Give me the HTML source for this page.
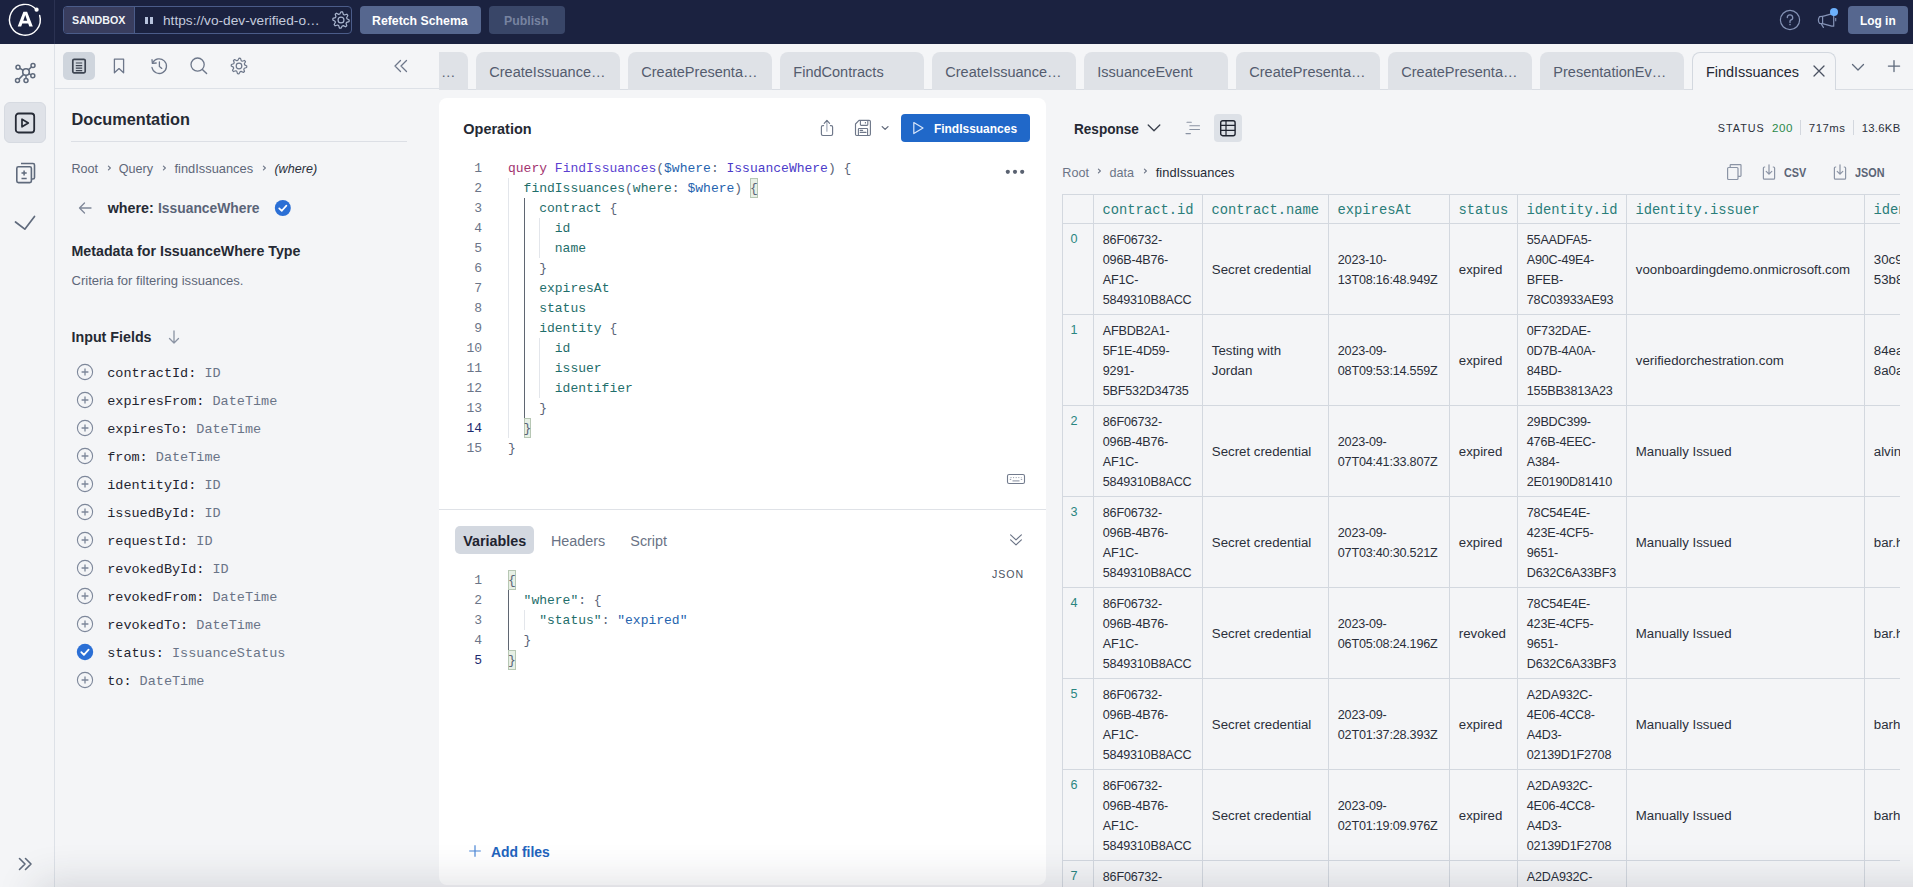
<!DOCTYPE html>
<html><head><meta charset="utf-8"><style>
html,body{margin:0;padding:0;width:1913px;height:887px;overflow:hidden;background:#f4f5f7;font-family:"Liberation Sans", sans-serif;}
.t{position:absolute;white-space:nowrap;line-height:20px;}

svg{overflow:visible}
</style></head><body>
<div style="position:absolute;left:0px;top:0px;width:1913px;height:44px;background:#1b2240"></div><div style="position:absolute;left:54px;top:0px;width:1px;height:44px;background:#2b3252"></div><svg style="position:absolute;left:7px;top:2px;" width="36" height="36" viewBox="0 0 36 36" fill="none"><path d="M32.68 13.48 A15.4 15.4 0 1 1 29.56 7.74" stroke="#fff" stroke-width="1.45" stroke-linecap="round"/><circle cx="29.6" cy="7.7" r="2.1" fill="#fff"/><path fill-rule="evenodd" d="M10.7 24.4 L16.4 9.8 L20.1 9.8 L25.8 24.4 L22.3 24.4 L21.2 21.4 L15.3 21.4 L14.2 24.4 Z M16.3 18.8 L18.25 13.1 L20.2 18.8 Z" fill="#fff"/></svg><div style="position:absolute;left:63px;top:6px;width:289px;height:28px;box-sizing:border-box;border:1px solid #4b5c89;border-radius:4px;background:#1b2240"></div><div style="position:absolute;left:64px;top:7px;width:70px;height:26px;background:#393d5e;border-radius:3px 0 0 3px"></div><div style="position:absolute;left:134px;top:7px;width:1px;height:26px;background:#4b5c89"></div><div class="t" style="left:72px;top:10px;font-size:10.7px;color:#f2f4f8;font-weight:700;">SANDBOX</div><div style="position:absolute;left:145px;top:16.5px;width:3px;height:7.5px;background:#b7c3dc"></div><div style="position:absolute;left:150px;top:16.5px;width:3px;height:7.5px;background:#b7c3dc"></div><div class="t" style="left:163px;top:11px;font-size:13.7px;color:#c3cbdd;">https://vo-dev-verified-o…</div><svg style="position:absolute;left:331px;top:10px;" width="20" height="20" viewBox="0 0 20 20" fill="none"><path d="M18.20 10.00 L18.04 11.60 L15.61 12.32 L15.05 13.37 L15.80 15.80 L14.56 16.82 L12.32 15.61 L11.18 15.95 L10.00 18.20 L8.40 18.04 L7.68 15.61 L6.63 15.05 L4.20 15.80 L3.18 14.56 L4.39 12.32 L4.05 11.18 L1.80 10.00 L1.96 8.40 L4.39 7.68 L4.95 6.63 L4.20 4.20 L5.44 3.18 L7.68 4.39 L8.82 4.05 L10.00 1.80 L11.60 1.96 L12.32 4.39 L13.37 4.95 L15.80 4.20 L16.82 5.44 L15.61 7.68 L15.95 8.82Z" stroke="#aab6cf" stroke-width="1.2" stroke-linejoin="round"/><circle cx="10" cy="10" r="2.95" stroke="#aab6cf" stroke-width="1.2"/></svg><div style="position:absolute;left:360px;top:6px;width:121px;height:28px;background:#56678f;border-radius:4px"></div><div class="t" style="left:372px;top:11px;font-size:12.3px;color:#ffffff;font-weight:700;">Refetch Schema</div><div style="position:absolute;left:489px;top:6px;width:76px;height:28px;background:#394668;border-radius:4px"></div><div class="t" style="left:504px;top:11px;font-size:12.3px;color:#7783a0;font-weight:700;">Publish</div><svg style="position:absolute;left:1778px;top:8px;" width="24" height="24" viewBox="0 0 24 24" fill="none"><circle cx="12" cy="12" r="9.6" stroke="#8593b6" stroke-width="1.2"/><path d="M9.3 9.6 A2.7 2.7 0 1 1 12.6 12.2 Q12 12.5 12 13.6 L12 14.4" stroke="#8593b6" stroke-width="1.3" fill="none" stroke-linecap="round"/><circle cx="12" cy="16.6" r="0.8" fill="#8593b6"/></svg><svg style="position:absolute;left:1810px;top:0px;" width="30" height="32" viewBox="0 0 30 32" fill="none"><path d="M12.6 16.4 L21.7 13.9 L23.7 13.9 L23.7 26.2 L21.7 26.2 L12.6 23.7 Z" stroke="#8593b6" stroke-width="1.2" stroke-linejoin="round"/><path d="M12.6 16.4 L9.6 16.6 Q7.2 20 9.6 23.5 L12.6 23.7" stroke="#8593b6" stroke-width="1.2" stroke-linejoin="round"/><path d="M11 23.4 L13.4 27.4" stroke="#8593b6" stroke-width="1.2" stroke-linecap="round"/><path d="M25.7 18 L25.7 21.3" stroke="#8593b6" stroke-width="1.1"/><circle cx="24" cy="12" r="4" fill="#6cb0fb"/></svg><div style="position:absolute;left:1848px;top:6px;width:60px;height:28px;background:#56678f;border-radius:4px"></div><div class="t" style="left:1860px;top:11px;font-size:11.9px;color:#ffffff;font-weight:700;">Log in</div><div style="position:absolute;left:0px;top:44px;width:54px;height:843px;background:#f4f5f7"></div><div style="position:absolute;left:54px;top:44px;width:1px;height:843px;background:#dde1e7"></div><svg style="position:absolute;left:13px;top:59px;" width="26" height="26" viewBox="0 0 26 26" fill="none"><line x1="13" y1="13" x2="5" y2="8.2" stroke="#5f6a7c" stroke-width="1.5"/><line x1="13" y1="13" x2="20" y2="6.6" stroke="#5f6a7c" stroke-width="1.5"/><line x1="13" y1="13" x2="19.8" y2="16.8" stroke="#5f6a7c" stroke-width="1.5"/><line x1="13" y1="13" x2="13" y2="21.6" stroke="#5f6a7c" stroke-width="1.5"/><line x1="13" y1="13" x2="4.5" y2="21.6" stroke="#5f6a7c" stroke-width="1.5"/><circle cx="13" cy="13" r="3.3" fill="#f4f5f7" stroke="#5f6a7c" stroke-width="1.6"/><circle cx="5" cy="8.2" r="2" fill="#f4f5f7" stroke="#5f6a7c" stroke-width="1.5"/><circle cx="20" cy="6.6" r="2" fill="#f4f5f7" stroke="#5f6a7c" stroke-width="1.5"/><circle cx="19.8" cy="16.8" r="2" fill="#f4f5f7" stroke="#5f6a7c" stroke-width="1.5"/><circle cx="13" cy="21.6" r="2" fill="#f4f5f7" stroke="#5f6a7c" stroke-width="1.5"/><circle cx="4.5" cy="21.6" r="2" fill="#f4f5f7" stroke="#5f6a7c" stroke-width="1.5"/></svg><div style="position:absolute;left:4px;top:102px;width:42px;height:41px;box-sizing:border-box;background:#dfe2e8;border:1px solid #d6dae1;border-radius:6px"></div><svg style="position:absolute;left:13px;top:111px;" width="24" height="24" viewBox="0 0 24 24" fill="none"><rect x="2.8" y="2.5" width="18.4" height="19" rx="2.8" stroke="#262b36" stroke-width="1.8"/><path d="M9 8.2 L9 15.8 L15.3 12 Z" stroke="#262b36" stroke-width="1.7" stroke-linejoin="round"/></svg><svg style="position:absolute;left:13px;top:160px;" width="26" height="26" viewBox="0 0 26 26" fill="none"><path d="M8 3.5 L20 3.5 Q21.5 3.5 21.5 5 L21.5 17.5 Q21.5 19 20 19 L19 19" stroke="#5f6a7c" stroke-width="1.6"/><rect x="3.8" y="6.8" width="14.6" height="15.8" rx="1.6" stroke="#5f6a7c" stroke-width="1.6"/><path d="M8.5 13 L13.7 13 M11.1 10.4 L11.1 15.6 M8.5 18.5 L13.7 18.5" stroke="#5f6a7c" stroke-width="1.5"/></svg><svg style="position:absolute;left:13px;top:210px;" width="26" height="24" viewBox="0 0 26 24" fill="none"><path d="M2.5 12 L11.8 19.2 L21.5 6.5" stroke="#5f6a7c" stroke-width="1.7" stroke-linecap="round" stroke-linejoin="round"/></svg><svg style="position:absolute;left:17px;top:856px;" width="18" height="16" viewBox="0 0 18 16" fill="none"><path d="M2.5 2.5 L8 8 L2.5 13.5 M8.5 2.5 L14 8 L8.5 13.5" stroke="#5f6a7c" stroke-width="1.6" stroke-linecap="round" stroke-linejoin="round"/></svg><div style="position:absolute;left:55px;top:44px;width:385px;height:843px;background:#f4f5f7"></div><div style="position:absolute;left:55px;top:88px;width:384px;height:1px;background:#dde1e7"></div><div style="position:absolute;left:63px;top:52px;width:32px;height:28px;background:#cfd5dd;border-radius:5px"></div><svg style="position:absolute;left:71px;top:58px;" width="16" height="16" viewBox="0 0 16 16" fill="none"><rect x="1.8" y="1.3" width="12.4" height="13.6" rx="1.3" stroke="#3d4451" stroke-width="1.7"/><path d="M4.8 5 H11.2 M4.8 7.6 H11.2 M4.8 10.2 H11.2 M4.8 12.6 H11.2" stroke="#3d4451" stroke-width="1.2"/></svg><svg style="position:absolute;left:111px;top:57px;" width="16" height="18" viewBox="0 0 16 18" fill="none"><path d="M3.4 2.2 H12.6 V15.8 L8 11.6 L3.4 15.8 Z" stroke="#6d778a" stroke-width="1.3" stroke-linejoin="round"/></svg><svg style="position:absolute;left:150px;top:57px;" width="18" height="18" viewBox="0 0 18 18" fill="none"><path d="M2.6 6 A7.3 7.3 0 1 1 2 10.5" stroke="#6d778a" stroke-width="1.3" stroke-linecap="round"/><path d="M2 2.6 L2.4 6.4 L6.2 6" stroke="#6d778a" stroke-width="1.3" stroke-linecap="round" stroke-linejoin="round"/><path d="M9.4 5 L9.4 9.4 L11.8 11.4" stroke="#6d778a" stroke-width="1.3" stroke-linecap="round"/></svg><svg style="position:absolute;left:190px;top:57px;" width="18" height="18" viewBox="0 0 18 18" fill="none"><circle cx="7.6" cy="7.6" r="6.6" stroke="#6d778a" stroke-width="1.3"/><path d="M12.4 12.4 L16.6 16.6" stroke="#6d778a" stroke-width="1.4" stroke-linecap="round"/></svg><svg style="position:absolute;left:230px;top:57px;" width="18" height="18" viewBox="0 0 18 18" fill="none"><path d="M16.80 9.00 L16.65 10.52 L14.33 11.21 L13.80 12.21 L14.52 14.52 L13.33 15.49 L11.21 14.33 L10.13 14.66 L9.00 16.80 L7.48 16.65 L6.79 14.33 L5.79 13.80 L3.48 14.52 L2.51 13.33 L3.67 11.21 L3.34 10.13 L1.20 9.00 L1.35 7.48 L3.67 6.79 L4.20 5.79 L3.48 3.48 L4.67 2.51 L6.79 3.67 L7.87 3.34 L9.00 1.20 L10.52 1.35 L11.21 3.67 L12.21 4.20 L14.52 3.48 L15.49 4.67 L14.33 6.79 L14.66 7.87Z" stroke="#6d778a" stroke-width="1.2" stroke-linejoin="round"/><circle cx="9" cy="9" r="2.81" stroke="#6d778a" stroke-width="1.2"/></svg><svg style="position:absolute;left:392px;top:57px;" width="18" height="18" viewBox="0 0 18 18" fill="none"><path d="M8.5 3.5 L3 9 L8.5 14.5 M14.5 3.5 L9 9 L14.5 14.5" stroke="#6d778a" stroke-width="1.3" stroke-linecap="round" stroke-linejoin="round"/></svg><div class="t" style="left:71.5px;top:109px;font-size:16.3px;color:#252933;font-weight:700;">Documentation</div><div style="position:absolute;left:71px;top:141px;width:336px;height:1px;background:#dcdfe5"></div><div class="t" style="left:71.5px;top:159px;font-size:12.6px;color:#5e6779;">Root</div><svg style="position:absolute;left:106px;top:164px;" width="7" height="8" viewBox="0 0 7 8" fill="none"><path d="M2.4 2.2 L4.4 4 L2.4 5.8" stroke="#6b7486" stroke-width="1.1" stroke-linecap="round" stroke-linejoin="round"/></svg><div class="t" style="left:118.8px;top:159px;font-size:12.6px;color:#5e6779;">Query</div><svg style="position:absolute;left:161px;top:164px;" width="7" height="8" viewBox="0 0 7 8" fill="none"><path d="M2.4 2.2 L4.4 4 L2.4 5.8" stroke="#6b7486" stroke-width="1.1" stroke-linecap="round" stroke-linejoin="round"/></svg><div class="t" style="left:174.5px;top:159px;font-size:12.87px;color:#5e6779;">findIssuances</div><svg style="position:absolute;left:261px;top:164px;" width="7" height="8" viewBox="0 0 7 8" fill="none"><path d="M2.4 2.2 L4.4 4 L2.4 5.8" stroke="#6b7486" stroke-width="1.1" stroke-linecap="round" stroke-linejoin="round"/></svg><div class="t" style="left:274.4px;top:159px;font-size:12.6px;color:#2a2f3a;font-style:italic;">(where)</div><svg style="position:absolute;left:77px;top:201px;" width="16" height="14" viewBox="0 0 16 14" fill="none"><path d="M7.5 2 L2.5 7 L7.5 12 M2.5 7 H14" stroke="#7f8899" stroke-width="1.3" stroke-linecap="round" stroke-linejoin="round"/></svg><div class="t" style="left:107.7px;top:198px;font-size:14.27px;color:#252933;font-weight:700;">where:</div><div class="t" style="left:158.4px;top:198px;font-size:14.27px;color:#5a6478;font-weight:700;transform:scaleX(0.97);transform-origin:0 0;">IssuanceWhere</div><svg style="position:absolute;left:274px;top:199px;" width="18" height="18" viewBox="0 0 18 18" fill="none"><circle cx="8.8" cy="9" r="8" fill="#2b6fd5"/><path d="M5.2 9.3 L7.8 11.8 L12.4 6.6" stroke="#fff" stroke-width="1.7" stroke-linecap="round" stroke-linejoin="round"/></svg><div class="t" style="left:71.5px;top:241px;font-size:14.22px;color:#252933;font-weight:700;">Metadata for IssuanceWhere Type</div><div class="t" style="left:71.5px;top:271px;font-size:13.05px;color:#5e6779;">Criteria for filtering issuances.</div><div class="t" style="left:71.5px;top:327px;font-size:14.28px;color:#252933;font-weight:700;">Input Fields</div><svg style="position:absolute;left:166px;top:329px;" width="16" height="16" viewBox="0 0 16 16" fill="none"><path d="M8 2 V14 M3.5 9.5 L8 14 L12.5 9.5" stroke="#8a93a3" stroke-width="1.3" stroke-linecap="round" stroke-linejoin="round"/></svg><svg style="position:absolute;left:76px;top:363px;" width="18" height="18" viewBox="0 0 18 18" fill="none"><circle cx="9" cy="9" r="7.6" stroke="#7d879a" stroke-width="1.1"/><path d="M9 5.6 V12.4 M5.6 9 H12.4" stroke="#7d879a" stroke-width="1.3"/></svg><div class="t" style="left:107.2px;top:364px;font-size:13.5px;color:#1f2430;font-family:'Liberation Mono', monospace;">contractId: <span style="color:#6a7487">ID</span></div><svg style="position:absolute;left:76px;top:391px;" width="18" height="18" viewBox="0 0 18 18" fill="none"><circle cx="9" cy="9" r="7.6" stroke="#7d879a" stroke-width="1.1"/><path d="M9 5.6 V12.4 M5.6 9 H12.4" stroke="#7d879a" stroke-width="1.3"/></svg><div class="t" style="left:107.2px;top:392px;font-size:13.5px;color:#1f2430;font-family:'Liberation Mono', monospace;">expiresFrom: <span style="color:#6a7487">DateTime</span></div><svg style="position:absolute;left:76px;top:419px;" width="18" height="18" viewBox="0 0 18 18" fill="none"><circle cx="9" cy="9" r="7.6" stroke="#7d879a" stroke-width="1.1"/><path d="M9 5.6 V12.4 M5.6 9 H12.4" stroke="#7d879a" stroke-width="1.3"/></svg><div class="t" style="left:107.2px;top:420px;font-size:13.5px;color:#1f2430;font-family:'Liberation Mono', monospace;">expiresTo: <span style="color:#6a7487">DateTime</span></div><svg style="position:absolute;left:76px;top:447px;" width="18" height="18" viewBox="0 0 18 18" fill="none"><circle cx="9" cy="9" r="7.6" stroke="#7d879a" stroke-width="1.1"/><path d="M9 5.6 V12.4 M5.6 9 H12.4" stroke="#7d879a" stroke-width="1.3"/></svg><div class="t" style="left:107.2px;top:448px;font-size:13.5px;color:#1f2430;font-family:'Liberation Mono', monospace;">from: <span style="color:#6a7487">DateTime</span></div><svg style="position:absolute;left:76px;top:475px;" width="18" height="18" viewBox="0 0 18 18" fill="none"><circle cx="9" cy="9" r="7.6" stroke="#7d879a" stroke-width="1.1"/><path d="M9 5.6 V12.4 M5.6 9 H12.4" stroke="#7d879a" stroke-width="1.3"/></svg><div class="t" style="left:107.2px;top:476px;font-size:13.5px;color:#1f2430;font-family:'Liberation Mono', monospace;">identityId: <span style="color:#6a7487">ID</span></div><svg style="position:absolute;left:76px;top:503px;" width="18" height="18" viewBox="0 0 18 18" fill="none"><circle cx="9" cy="9" r="7.6" stroke="#7d879a" stroke-width="1.1"/><path d="M9 5.6 V12.4 M5.6 9 H12.4" stroke="#7d879a" stroke-width="1.3"/></svg><div class="t" style="left:107.2px;top:504px;font-size:13.5px;color:#1f2430;font-family:'Liberation Mono', monospace;">issuedById: <span style="color:#6a7487">ID</span></div><svg style="position:absolute;left:76px;top:531px;" width="18" height="18" viewBox="0 0 18 18" fill="none"><circle cx="9" cy="9" r="7.6" stroke="#7d879a" stroke-width="1.1"/><path d="M9 5.6 V12.4 M5.6 9 H12.4" stroke="#7d879a" stroke-width="1.3"/></svg><div class="t" style="left:107.2px;top:532px;font-size:13.5px;color:#1f2430;font-family:'Liberation Mono', monospace;">requestId: <span style="color:#6a7487">ID</span></div><svg style="position:absolute;left:76px;top:559px;" width="18" height="18" viewBox="0 0 18 18" fill="none"><circle cx="9" cy="9" r="7.6" stroke="#7d879a" stroke-width="1.1"/><path d="M9 5.6 V12.4 M5.6 9 H12.4" stroke="#7d879a" stroke-width="1.3"/></svg><div class="t" style="left:107.2px;top:560px;font-size:13.5px;color:#1f2430;font-family:'Liberation Mono', monospace;">revokedById: <span style="color:#6a7487">ID</span></div><svg style="position:absolute;left:76px;top:587px;" width="18" height="18" viewBox="0 0 18 18" fill="none"><circle cx="9" cy="9" r="7.6" stroke="#7d879a" stroke-width="1.1"/><path d="M9 5.6 V12.4 M5.6 9 H12.4" stroke="#7d879a" stroke-width="1.3"/></svg><div class="t" style="left:107.2px;top:588px;font-size:13.5px;color:#1f2430;font-family:'Liberation Mono', monospace;">revokedFrom: <span style="color:#6a7487">DateTime</span></div><svg style="position:absolute;left:76px;top:615px;" width="18" height="18" viewBox="0 0 18 18" fill="none"><circle cx="9" cy="9" r="7.6" stroke="#7d879a" stroke-width="1.1"/><path d="M9 5.6 V12.4 M5.6 9 H12.4" stroke="#7d879a" stroke-width="1.3"/></svg><div class="t" style="left:107.2px;top:616px;font-size:13.5px;color:#1f2430;font-family:'Liberation Mono', monospace;">revokedTo: <span style="color:#6a7487">DateTime</span></div><svg style="position:absolute;left:76px;top:643px;" width="18" height="18" viewBox="0 0 18 18" fill="none"><circle cx="9" cy="9" r="8.2" fill="#2b6fd5"/><path d="M5.3 9.2 L7.9 11.8 L12.6 6.6" stroke="#fff" stroke-width="1.8" stroke-linecap="round" stroke-linejoin="round"/></svg><div class="t" style="left:107.2px;top:644px;font-size:13.5px;color:#1f2430;font-family:'Liberation Mono', monospace;">status: <span style="color:#6a7487">IssuanceStatus</span></div><svg style="position:absolute;left:76px;top:671px;" width="18" height="18" viewBox="0 0 18 18" fill="none"><circle cx="9" cy="9" r="7.6" stroke="#7d879a" stroke-width="1.1"/><path d="M9 5.6 V12.4 M5.6 9 H12.4" stroke="#7d879a" stroke-width="1.3"/></svg><div class="t" style="left:107.2px;top:672px;font-size:13.5px;color:#1f2430;font-family:'Liberation Mono', monospace;">to: <span style="color:#6a7487">DateTime</span></div><div style="position:absolute;left:439px;top:44px;width:1474px;height:45px;background:#f4f5f7"></div><div style="position:absolute;left:439px;top:89px;width:1474px;height:1px;background:#d9dde3"></div><div style="position:absolute;left:439px;top:52px;width:29px;height:38px;background:#dfe2e7;border-radius:0 8px 0 0"></div><div class="t" style="left:441px;top:62px;font-size:14.5px;color:#5a6275;">…</div><div style="position:absolute;left:476px;top:52px;width:144px;height:38px;background:#dfe2e7;border-radius:8px 8px 0 0"></div><div class="t" style="left:489.3px;top:62px;font-size:14.53px;color:#545c6e;">CreateIssuance…</div><div style="position:absolute;left:628px;top:52px;width:144px;height:38px;background:#dfe2e7;border-radius:8px 8px 0 0"></div><div class="t" style="left:641.3px;top:62px;font-size:14.53px;color:#545c6e;">CreatePresenta…</div><div style="position:absolute;left:780px;top:52px;width:144px;height:38px;background:#dfe2e7;border-radius:8px 8px 0 0"></div><div class="t" style="left:793.3px;top:62px;font-size:14.53px;color:#545c6e;">FindContracts</div><div style="position:absolute;left:932px;top:52px;width:144px;height:38px;background:#dfe2e7;border-radius:8px 8px 0 0"></div><div class="t" style="left:945.3px;top:62px;font-size:14.53px;color:#545c6e;">CreateIssuance…</div><div style="position:absolute;left:1084px;top:52px;width:144px;height:38px;background:#dfe2e7;border-radius:8px 8px 0 0"></div><div class="t" style="left:1097.3px;top:62px;font-size:14.53px;color:#545c6e;">IssuanceEvent</div><div style="position:absolute;left:1236px;top:52px;width:144px;height:38px;background:#dfe2e7;border-radius:8px 8px 0 0"></div><div class="t" style="left:1249.3px;top:62px;font-size:14.53px;color:#545c6e;">CreatePresenta…</div><div style="position:absolute;left:1388px;top:52px;width:144px;height:38px;background:#dfe2e7;border-radius:8px 8px 0 0"></div><div class="t" style="left:1401.3px;top:62px;font-size:14.53px;color:#545c6e;">CreatePresenta…</div><div style="position:absolute;left:1540px;top:52px;width:144px;height:38px;background:#dfe2e7;border-radius:8px 8px 0 0"></div><div class="t" style="left:1553.3px;top:62px;font-size:14.53px;color:#545c6e;">PresentationEv…</div><div style="position:absolute;left:1692px;top:52px;width:144px;height:38px;box-sizing:border-box;background:#f4f5f7;border:1px solid #d3d8df;border-bottom:none;border-radius:8px 8px 0 0"></div><div class="t" style="left:1706px;top:62px;font-size:14.45px;color:#242833;">FindIssuances</div><svg style="position:absolute;left:1812px;top:64px;" width="14" height="14" viewBox="0 0 14 14" fill="none"><path d="M2 2 L12 12 M12 2 L2 12" stroke="#4a5262" stroke-width="1.3" stroke-linecap="round"/></svg><svg style="position:absolute;left:1850px;top:61px;" width="16" height="12" viewBox="0 0 16 12" fill="none"><path d="M2.5 3.5 L8 9 L13.5 3.5" stroke="#5f6a7c" stroke-width="1.3" stroke-linecap="round" stroke-linejoin="round"/></svg><svg style="position:absolute;left:1886px;top:58px;" width="16" height="16" viewBox="0 0 16 16" fill="none"><path d="M8 2.6 V13.6 M2.4 8.1 H13.6" stroke="#5f6a7c" stroke-width="1.3" stroke-linecap="round"/></svg><div style="position:absolute;left:439px;top:98px;width:607px;height:787px;background:#ffffff;border-radius:8px"></div><div class="t" style="left:463.3px;top:119px;font-size:14.48px;color:#252933;font-weight:700;">Operation</div><svg style="position:absolute;left:812px;top:112px;" width="84" height="32" viewBox="0 0 84 32" fill="none"><path d="M823.6 125.6 H822.8 Q821.4 125.6 821.4 127 V134.1 Q821.4 135.5 822.8 135.5 H831.2 Q832.6 135.5 832.6 134.1 V127 Q832.6 125.6 831.2 125.6 H830.4" transform="translate(-812 -112)" stroke="#6e7789" stroke-width="1.15" stroke-linecap="round"/><path d="M826.9 120.6 V131.2" transform="translate(-812 -112)" stroke="#9aa3b3" stroke-width="1.1" stroke-linecap="round"/><path d="M824.2 123.3 L826.9 120.4 L829.6 123.3" transform="translate(-812 -112)" stroke="#6e7789" stroke-width="1.15" stroke-linecap="round" stroke-linejoin="round"/><path d="M859 120.4 H869.2 Q870.4 120.4 870.4 121.6 V134.3 Q870.4 135.5 869.2 135.5 H856.7 Q855.5 135.5 855.5 134.3 V124 Z" transform="translate(-812 -112)" stroke="#6e7789" stroke-width="1.15" stroke-linejoin="round"/><path d="M860.4 120.4 V124.6 Q860.4 125.4 861.2 125.4 H867 Q867.8 125.4 867.8 124.6 V120.4 M865.4 122 V123.6" transform="translate(-812 -112)" stroke="#6e7789" stroke-width="1.1"/><path d="M858.4 135.5 V129.3 Q858.4 128.5 859.2 128.5 H866.8 Q867.6 128.5 867.6 129.3 V135.5 M860.2 130.4 H862.6 M860.2 132.4 H866" transform="translate(-812 -112)" stroke="#6e7789" stroke-width="1.1" stroke-linecap="round"/><path d="M882.2 126.6 L885.1 129.4 L888 126.6" transform="translate(-812 -112)" stroke="#5f6879" stroke-width="1.3" stroke-linecap="round" stroke-linejoin="round"/></svg><div style="position:absolute;left:901px;top:114px;width:129px;height:28px;background:#2068c9;border-radius:4px"></div><svg style="position:absolute;left:910px;top:120px;" width="16" height="16" viewBox="0 0 16 16" fill="none"><path d="M3.8 2.6 V13.6 L13 8.1 Z" stroke="#d9e6fa" stroke-width="1.2" stroke-linejoin="round"/></svg><div class="t" style="left:933.9px;top:119px;font-size:11.97px;color:#ffffff;font-weight:700;">FindIssuances</div><svg style="position:absolute;left:1003px;top:166px;" width="24" height="12" viewBox="0 0 24 12" fill="none"><circle cx="4.8" cy="5.8" r="2.1" fill="#5a6271"/><circle cx="12" cy="5.8" r="2.1" fill="#5a6271"/><circle cx="19.2" cy="5.8" r="2.1" fill="#5a6271"/></svg><div style="position:absolute;left:508px;top:178px;width:1px;height:260px;background:#e3e6eb"></div><div style="position:absolute;left:524px;top:198px;width:1px;height:220px;background:#5f6672"></div><div style="position:absolute;left:539px;top:218px;width:1px;height:40px;background:#e3e6eb"></div><div style="position:absolute;left:539px;top:338px;width:1px;height:60px;background:#e3e6eb"></div><div style="position:absolute;left:750px;top:178px;width:8px;height:20px;box-sizing:border-box;background:#e7f0e5;border:1px solid #b7c7b4"></div><div style="position:absolute;left:524px;top:418px;width:7px;height:20px;box-sizing:border-box;background:#e7f0e5;border:1px solid #b7c7b4"></div><div class="t" style="left:474.2px;top:159px;font-size:13px;color:#6b7588;font-family:'Liberation Mono', monospace;">1</div><div class="t" style="left:508px;top:159px;font-size:13px;color:#1f6e6b;font-family:'Liberation Mono', monospace;white-space:pre;"><span style="color:#a2336f">query</span> <span style="color:#5b3fd0">FindIssuances</span><span style="color:#5a6478">(</span><span style="color:#2463ae">$where</span><span style="color:#5a6478">:</span> <span style="color:#4b3bc9">IssuanceWhere</span><span style="color:#5a6478">) {</span></div><div class="t" style="left:474.2px;top:179px;font-size:13px;color:#6b7588;font-family:'Liberation Mono', monospace;">2</div><div class="t" style="left:508px;top:179px;font-size:13px;color:#1f6e6b;font-family:'Liberation Mono', monospace;white-space:pre;">  <span style="color:#1f6e6b">findIssuances</span><span style="color:#5a6478">(</span><span style="color:#1f6e6b">where</span><span style="color:#5a6478">:</span> <span style="color:#2463ae">$where</span><span style="color:#5a6478">)</span> <span class="mb" style="color:#5a6478">{</span></div><div class="t" style="left:474.2px;top:199px;font-size:13px;color:#6b7588;font-family:'Liberation Mono', monospace;">3</div><div class="t" style="left:508px;top:199px;font-size:13px;color:#1f6e6b;font-family:'Liberation Mono', monospace;white-space:pre;">    <span style="color:#1f6e6b">contract</span> <span style="color:#5a6478">{</span></div><div class="t" style="left:474.2px;top:219px;font-size:13px;color:#6b7588;font-family:'Liberation Mono', monospace;">4</div><div class="t" style="left:508px;top:219px;font-size:13px;color:#1f6e6b;font-family:'Liberation Mono', monospace;white-space:pre;">      <span style="color:#1f6e6b">id</span></div><div class="t" style="left:474.2px;top:239px;font-size:13px;color:#6b7588;font-family:'Liberation Mono', monospace;">5</div><div class="t" style="left:508px;top:239px;font-size:13px;color:#1f6e6b;font-family:'Liberation Mono', monospace;white-space:pre;">      <span style="color:#1f6e6b">name</span></div><div class="t" style="left:474.2px;top:259px;font-size:13px;color:#6b7588;font-family:'Liberation Mono', monospace;">6</div><div class="t" style="left:508px;top:259px;font-size:13px;color:#1f6e6b;font-family:'Liberation Mono', monospace;white-space:pre;">    <span style="color:#5a6478">}</span></div><div class="t" style="left:474.2px;top:279px;font-size:13px;color:#6b7588;font-family:'Liberation Mono', monospace;">7</div><div class="t" style="left:508px;top:279px;font-size:13px;color:#1f6e6b;font-family:'Liberation Mono', monospace;white-space:pre;">    <span style="color:#1f6e6b">expiresAt</span></div><div class="t" style="left:474.2px;top:299px;font-size:13px;color:#6b7588;font-family:'Liberation Mono', monospace;">8</div><div class="t" style="left:508px;top:299px;font-size:13px;color:#1f6e6b;font-family:'Liberation Mono', monospace;white-space:pre;">    <span style="color:#1f6e6b">status</span></div><div class="t" style="left:474.2px;top:319px;font-size:13px;color:#6b7588;font-family:'Liberation Mono', monospace;">9</div><div class="t" style="left:508px;top:319px;font-size:13px;color:#1f6e6b;font-family:'Liberation Mono', monospace;white-space:pre;">    <span style="color:#1f6e6b">identity</span> <span style="color:#5a6478">{</span></div><div class="t" style="left:466.4px;top:339px;font-size:13px;color:#6b7588;font-family:'Liberation Mono', monospace;">10</div><div class="t" style="left:508px;top:339px;font-size:13px;color:#1f6e6b;font-family:'Liberation Mono', monospace;white-space:pre;">      <span style="color:#1f6e6b">id</span></div><div class="t" style="left:466.4px;top:359px;font-size:13px;color:#6b7588;font-family:'Liberation Mono', monospace;">11</div><div class="t" style="left:508px;top:359px;font-size:13px;color:#1f6e6b;font-family:'Liberation Mono', monospace;white-space:pre;">      <span style="color:#1f6e6b">issuer</span></div><div class="t" style="left:466.4px;top:379px;font-size:13px;color:#6b7588;font-family:'Liberation Mono', monospace;">12</div><div class="t" style="left:508px;top:379px;font-size:13px;color:#1f6e6b;font-family:'Liberation Mono', monospace;white-space:pre;">      <span style="color:#1f6e6b">identifier</span></div><div class="t" style="left:466.4px;top:399px;font-size:13px;color:#6b7588;font-family:'Liberation Mono', monospace;">13</div><div class="t" style="left:508px;top:399px;font-size:13px;color:#1f6e6b;font-family:'Liberation Mono', monospace;white-space:pre;">    <span style="color:#5a6478">}</span></div><div class="t" style="left:466.4px;top:419px;font-size:13px;color:#1c2b6e;font-family:'Liberation Mono', monospace;">14</div><div class="t" style="left:508px;top:419px;font-size:13px;color:#1f6e6b;font-family:'Liberation Mono', monospace;white-space:pre;">  <span class="mb" style="color:#5a6478">}</span></div><div class="t" style="left:466.4px;top:439px;font-size:13px;color:#6b7588;font-family:'Liberation Mono', monospace;">15</div><div class="t" style="left:508px;top:439px;font-size:13px;color:#1f6e6b;font-family:'Liberation Mono', monospace;white-space:pre;"><span style="color:#5a6478">}</span></div><svg style="position:absolute;left:1005px;top:472px;" width="22" height="14" viewBox="0 0 22 14" fill="none"><rect x="2.5" y="2.5" width="17" height="9" rx="1.6" stroke="#727b8d" stroke-width="1.1"/><path d="M5.5 5.6 H16.5" stroke="#8f97a6" stroke-width="1" stroke-dasharray="1 1.6"/><path d="M4.8 7.4 H6.2 M15.8 7.4 H17.2" stroke="#8f97a6" stroke-width="1"/><path d="M7.5 8.9 H14.5" stroke="#8f97a6" stroke-width="1.1"/></svg><div style="position:absolute;left:439px;top:509px;width:607px;height:1px;background:#dfe2e7"></div><div style="position:absolute;left:455px;top:526px;width:79px;height:28px;background:#d3d8e0;border-radius:5px"></div><div class="t" style="left:463.3px;top:531px;font-size:14.33px;color:#1f2430;font-weight:700;">Variables</div><div class="t" style="left:550.9px;top:531px;font-size:14.39px;color:#6a7385;">Headers</div><div class="t" style="left:630.3px;top:531px;font-size:14.39px;color:#6a7385;">Script</div><svg style="position:absolute;left:1007px;top:531px;" width="18" height="18" viewBox="0 0 18 18" fill="none"><path d="M3.6 3.8 L9 8.8 L14.4 3.8 M3.6 8.8 L9 13.8 L14.4 8.8" stroke="#6a7385" stroke-width="1.15" stroke-linecap="round" stroke-linejoin="round"/></svg><div class="t" style="left:992px;top:564px;font-size:10.6px;color:#4b5262;letter-spacing:1px;">JSON</div><div style="position:absolute;left:508px;top:590px;width:1px;height:60px;background:#5f6672"></div><div style="position:absolute;left:524px;top:610px;width:1px;height:20px;background:#e3e6eb"></div><div style="position:absolute;left:508px;top:570px;width:8px;height:20px;box-sizing:border-box;background:#e7f0e5;border:1px solid #b7c7b4"></div><div style="position:absolute;left:508px;top:650px;width:8px;height:20px;box-sizing:border-box;background:#e7f0e5;border:1px solid #b7c7b4"></div><div class="t" style="left:474.2px;top:571px;font-size:13px;color:#6b7588;font-family:'Liberation Mono', monospace;">1</div><div class="t" style="left:508px;top:571px;font-size:13px;color:#1f6e6b;font-family:'Liberation Mono', monospace;white-space:pre;"><span class="mb" style="color:#5a6478">{</span></div><div class="t" style="left:474.2px;top:591px;font-size:13px;color:#6b7588;font-family:'Liberation Mono', monospace;">2</div><div class="t" style="left:508px;top:591px;font-size:13px;color:#1f6e6b;font-family:'Liberation Mono', monospace;white-space:pre;">  <span style="color:#1f6e6b">"where"</span><span style="color:#5a6478">: {</span></div><div class="t" style="left:474.2px;top:611px;font-size:13px;color:#6b7588;font-family:'Liberation Mono', monospace;">3</div><div class="t" style="left:508px;top:611px;font-size:13px;color:#1f6e6b;font-family:'Liberation Mono', monospace;white-space:pre;">    <span style="color:#1f6e6b">"status"</span><span style="color:#5a6478">:</span> <span style="color:#2463ae">"expired"</span></div><div class="t" style="left:474.2px;top:631px;font-size:13px;color:#6b7588;font-family:'Liberation Mono', monospace;">4</div><div class="t" style="left:508px;top:631px;font-size:13px;color:#1f6e6b;font-family:'Liberation Mono', monospace;white-space:pre;">  <span style="color:#5a6478">}</span></div><div class="t" style="left:474.2px;top:651px;font-size:13px;color:#1c2b6e;font-family:'Liberation Mono', monospace;">5</div><div class="t" style="left:508px;top:651px;font-size:13px;color:#1f6e6b;font-family:'Liberation Mono', monospace;white-space:pre;"><span class="mb" style="color:#5a6478">}</span></div><svg style="position:absolute;left:466px;top:842px;" width="18" height="18" viewBox="0 0 18 18" fill="none"><path d="M9 3.2 V14.8 M3.2 9 H14.8" stroke="#4a86d6" stroke-width="1.2"/></svg><div class="t" style="left:491px;top:842px;font-size:13.92px;color:#2263bd;font-weight:700;">Add files</div><div style="position:absolute;left:1046px;top:98px;width:867px;height:789px;background:#f4f5f7"></div><div class="t" style="left:1074.3px;top:119px;font-size:14.8px;color:#252933;font-weight:700;transform:scaleX(0.918);transform-origin:0 0;">Response</div><svg style="position:absolute;left:1146px;top:122px;" width="16" height="12" viewBox="0 0 16 12" fill="none"><path d="M2.2 3 L8 8.8 L13.8 3" stroke="#3a404d" stroke-width="1.3" stroke-linecap="round" stroke-linejoin="round"/></svg><svg style="position:absolute;left:1183px;top:119px;" width="18" height="18" viewBox="0 0 18 18" fill="none"><path d="M4 3.3 H8.3 M6.8 6.8 H16.5 M6.8 10.5 H16.5 M3 14.6 H7.4" stroke="#8a93a3" stroke-width="1.1" stroke-linecap="round"/></svg><div style="position:absolute;left:1214px;top:114px;width:28px;height:28px;background:#dde1e7;border-radius:4px"></div><svg style="position:absolute;left:1219px;top:119px;" width="18" height="18" viewBox="0 0 18 18" fill="none"><rect x="1.7" y="1.7" width="14.4" height="15" rx="2" stroke="#1f2430" stroke-width="1.4"/><path d="M1.7 6.3 H16.1 M1.7 11.4 H16.1 M7 1.7 V16.7" stroke="#1f2430" stroke-width="1.2"/></svg><div class="t" style="left:1717.8px;top:118px;font-size:10.8px;color:#2c313c;letter-spacing:1px;">STATUS</div><div class="t" style="left:1772px;top:118px;font-size:11.6px;color:#2b8a4a;letter-spacing:0.6px;">200</div><div style="position:absolute;left:1800px;top:120px;width:1px;height:15px;background:#d3d7de"></div><div class="t" style="left:1808.8px;top:118px;font-size:11.4px;color:#2c313c;letter-spacing:0.5px;">717ms</div><div style="position:absolute;left:1853px;top:120px;width:1px;height:15px;background:#d3d7de"></div><div class="t" style="left:1861.7px;top:118px;font-size:11.3px;color:#2c313c;letter-spacing:0.3px;">13.6KB</div><div class="t" style="left:1062.3px;top:163px;font-size:12.6px;color:#6b7486;">Root</div><svg style="position:absolute;left:1096px;top:166.5px;" width="7" height="8" viewBox="0 0 7 8" fill="none"><path d="M2.4 2.2 L4.4 4 L2.4 5.8" stroke="#6b7486" stroke-width="1.1" stroke-linecap="round" stroke-linejoin="round"/></svg><div class="t" style="left:1109.5px;top:163px;font-size:12.6px;color:#6b7486;">data</div><svg style="position:absolute;left:1142px;top:166.5px;" width="7" height="8" viewBox="0 0 7 8" fill="none"><path d="M2.4 2.2 L4.4 4 L2.4 5.8" stroke="#6b7486" stroke-width="1.1" stroke-linecap="round" stroke-linejoin="round"/></svg><div class="t" style="left:1155.8px;top:163px;font-size:12.87px;color:#262b36;">findIssuances</div><svg style="position:absolute;left:1724px;top:162px;" width="20" height="20" viewBox="0 0 20 20" fill="none"><rect x="3.6" y="5.5" width="10.4" height="12" rx="1" stroke="#8b94a5" stroke-width="1.2"/><path d="M6.2 5.5 V3.2 Q6.2 2.6 6.8 2.6 H16.4 Q17 2.6 17 3.2 V13.6 Q17 14.4 16.2 14.4 H14" stroke="#8b94a5" stroke-width="1.2"/></svg><svg style="position:absolute;left:1760px;top:163px;" width="18" height="18" viewBox="0 0 18 18" fill="none"><path d="M5.2 4 H4.4 Q3.4 4 3.4 5 V15.2 Q3.4 16.2 4.4 16.2 H13.6 Q14.6 16.2 14.6 15.2 V5 Q14.6 4 13.6 4 H12.8" stroke="#8b94a5" stroke-width="1.2"/><path d="M9 1.8 V11.2 M6.2 8.4 L9 11.2 L11.8 8.4" stroke="#8b94a5" stroke-width="1.2" stroke-linecap="round" stroke-linejoin="round"/></svg><div class="t" style="left:1784.4px;top:163px;font-size:12.6px;color:#5b6476;font-weight:700;transform:scaleX(0.86);transform-origin:0 0;">CSV</div><svg style="position:absolute;left:1831px;top:163px;" width="18" height="18" viewBox="0 0 18 18" fill="none"><path d="M5.2 4 H4.4 Q3.4 4 3.4 5 V15.2 Q3.4 16.2 4.4 16.2 H13.6 Q14.6 16.2 14.6 15.2 V5 Q14.6 4 13.6 4 H12.8" stroke="#8b94a5" stroke-width="1.2"/><path d="M9 1.8 V11.2 M6.2 8.4 L9 11.2 L11.8 8.4" stroke="#8b94a5" stroke-width="1.2" stroke-linecap="round" stroke-linejoin="round"/></svg><div class="t" style="left:1855.3px;top:163px;font-size:12.6px;color:#5b6476;font-weight:700;transform:scaleX(0.86);transform-origin:0 0;">JSON</div><div style="position:absolute;left:1062px;top:194px;width:838px;height:700px;overflow:hidden"><div style="position:absolute;left:0px;top:0px;width:838px;height:1px;background:#d3d8df"></div><div style="position:absolute;left:0px;top:29px;width:838px;height:1px;background:#d3d8df"></div><div style="position:absolute;left:0px;top:120px;width:838px;height:1px;background:#d3d8df"></div><div style="position:absolute;left:0px;top:211px;width:838px;height:1px;background:#d3d8df"></div><div style="position:absolute;left:0px;top:302px;width:838px;height:1px;background:#d3d8df"></div><div style="position:absolute;left:0px;top:393px;width:838px;height:1px;background:#d3d8df"></div><div style="position:absolute;left:0px;top:484px;width:838px;height:1px;background:#d3d8df"></div><div style="position:absolute;left:0px;top:575px;width:838px;height:1px;background:#d3d8df"></div><div style="position:absolute;left:0px;top:666px;width:838px;height:1px;background:#d3d8df"></div><div style="position:absolute;left:0px;top:0px;width:1px;height:700px;background:#d3d8df"></div><div style="position:absolute;left:31px;top:0px;width:1px;height:700px;background:#d3d8df"></div><div style="position:absolute;left:140px;top:0px;width:1px;height:700px;background:#d3d8df"></div><div style="position:absolute;left:266px;top:0px;width:1px;height:700px;background:#d3d8df"></div><div style="position:absolute;left:387px;top:0px;width:1px;height:700px;background:#d3d8df"></div><div style="position:absolute;left:455px;top:0px;width:1px;height:700px;background:#d3d8df"></div><div style="position:absolute;left:564px;top:0px;width:1px;height:700px;background:#d3d8df"></div><div style="position:absolute;left:802px;top:0px;width:1px;height:700px;background:#d3d8df"></div><div class="t" style="left:40.5px;top:7px;font-size:13.8px;color:#2a7d79;font-family:'Liberation Mono', monospace;">contract.id</div><div class="t" style="left:149.5px;top:7px;font-size:13.8px;color:#2a7d79;font-family:'Liberation Mono', monospace;">contract.name</div><div class="t" style="left:275.5px;top:7px;font-size:13.8px;color:#2a7d79;font-family:'Liberation Mono', monospace;">expiresAt</div><div class="t" style="left:396.5px;top:7px;font-size:13.8px;color:#2a7d79;font-family:'Liberation Mono', monospace;">status</div><div class="t" style="left:464.5px;top:7px;font-size:13.8px;color:#2a7d79;font-family:'Liberation Mono', monospace;">identity.id</div><div class="t" style="left:573.5px;top:7px;font-size:13.8px;color:#2a7d79;font-family:'Liberation Mono', monospace;">identity.issuer</div><div class="t" style="left:811.5px;top:7px;font-size:13.8px;color:#2a7d79;font-family:'Liberation Mono', monospace;">identity.identifier</div><div class="t" style="left:8.5px;top:35.30000000000001px;font-size:12.6px;color:#2a8580;">0</div><div class="t" style="left:40.799999999999955px;top:36px;font-size:12.6px;color:#2a2f3a;letter-spacing:-0.2px;">86F06732-</div><div class="t" style="left:40.799999999999955px;top:56px;font-size:12.6px;color:#2a2f3a;letter-spacing:-0.2px;">096B-4B76-</div><div class="t" style="left:40.799999999999955px;top:76px;font-size:12.6px;color:#2a2f3a;letter-spacing:-0.2px;">AF1C-</div><div class="t" style="left:40.799999999999955px;top:96px;font-size:12.6px;color:#2a2f3a;letter-spacing:-0.2px;">5849310B8ACC</div><div class="t" style="left:149.79999999999995px;top:66px;font-size:13.25px;color:#2a2f3a;">Secret credential</div><div class="t" style="left:275.79999999999995px;top:56px;font-size:12.6px;color:#2a2f3a;letter-spacing:-0.2px;">2023-10-</div><div class="t" style="left:275.79999999999995px;top:76px;font-size:12.6px;color:#2a2f3a;letter-spacing:-0.2px;">13T08:16:48.949Z</div><div class="t" style="left:396.79999999999995px;top:66px;font-size:13.25px;color:#2a2f3a;">expired</div><div class="t" style="left:464.79999999999995px;top:36px;font-size:12.6px;color:#2a2f3a;letter-spacing:-0.2px;">55AADFA5-</div><div class="t" style="left:464.79999999999995px;top:56px;font-size:12.6px;color:#2a2f3a;letter-spacing:-0.2px;">A90C-49E4-</div><div class="t" style="left:464.79999999999995px;top:76px;font-size:12.6px;color:#2a2f3a;letter-spacing:-0.2px;">BFEB-</div><div class="t" style="left:464.79999999999995px;top:96px;font-size:12.6px;color:#2a2f3a;letter-spacing:-0.2px;">78C03933AE93</div><div class="t" style="left:573.8px;top:66px;font-size:13.25px;color:#2a2f3a;">voonboardingdemo.onmicrosoft.com</div><div class="t" style="left:811.8px;top:56px;font-size:13.25px;color:#2a2f3a;">30c9a1b2-</div><div class="t" style="left:811.8px;top:76px;font-size:13.25px;color:#2a2f3a;">53b8d4e5</div><div class="t" style="left:8.5px;top:126.30000000000001px;font-size:12.6px;color:#2a8580;">1</div><div class="t" style="left:40.799999999999955px;top:127px;font-size:12.6px;color:#2a2f3a;letter-spacing:-0.2px;">AFBDB2A1-</div><div class="t" style="left:40.799999999999955px;top:147px;font-size:12.6px;color:#2a2f3a;letter-spacing:-0.2px;">5F1E-4D59-</div><div class="t" style="left:40.799999999999955px;top:167px;font-size:12.6px;color:#2a2f3a;letter-spacing:-0.2px;">9291-</div><div class="t" style="left:40.799999999999955px;top:187px;font-size:12.6px;color:#2a2f3a;letter-spacing:-0.2px;">5BF532D34735</div><div class="t" style="left:149.79999999999995px;top:147px;font-size:13.25px;color:#2a2f3a;">Testing with</div><div class="t" style="left:149.79999999999995px;top:167px;font-size:13.25px;color:#2a2f3a;">Jordan</div><div class="t" style="left:275.79999999999995px;top:147px;font-size:12.6px;color:#2a2f3a;letter-spacing:-0.2px;">2023-09-</div><div class="t" style="left:275.79999999999995px;top:167px;font-size:12.6px;color:#2a2f3a;letter-spacing:-0.2px;">08T09:53:14.559Z</div><div class="t" style="left:396.79999999999995px;top:157px;font-size:13.25px;color:#2a2f3a;">expired</div><div class="t" style="left:464.79999999999995px;top:127px;font-size:12.6px;color:#2a2f3a;letter-spacing:-0.2px;">0F732DAE-</div><div class="t" style="left:464.79999999999995px;top:147px;font-size:12.6px;color:#2a2f3a;letter-spacing:-0.2px;">0D7B-4A0A-</div><div class="t" style="left:464.79999999999995px;top:167px;font-size:12.6px;color:#2a2f3a;letter-spacing:-0.2px;">84BD-</div><div class="t" style="left:464.79999999999995px;top:187px;font-size:12.6px;color:#2a2f3a;letter-spacing:-0.2px;">155BB3813A23</div><div class="t" style="left:573.8px;top:157px;font-size:13.25px;color:#2a2f3a;">verifiedorchestration.com</div><div class="t" style="left:811.8px;top:147px;font-size:13.25px;color:#2a2f3a;">84ea1c2d-</div><div class="t" style="left:811.8px;top:167px;font-size:13.25px;color:#2a2f3a;">8a0a3b4c</div><div class="t" style="left:8.5px;top:217.3px;font-size:12.6px;color:#2a8580;">2</div><div class="t" style="left:40.799999999999955px;top:218px;font-size:12.6px;color:#2a2f3a;letter-spacing:-0.2px;">86F06732-</div><div class="t" style="left:40.799999999999955px;top:238px;font-size:12.6px;color:#2a2f3a;letter-spacing:-0.2px;">096B-4B76-</div><div class="t" style="left:40.799999999999955px;top:258px;font-size:12.6px;color:#2a2f3a;letter-spacing:-0.2px;">AF1C-</div><div class="t" style="left:40.799999999999955px;top:278px;font-size:12.6px;color:#2a2f3a;letter-spacing:-0.2px;">5849310B8ACC</div><div class="t" style="left:149.79999999999995px;top:248px;font-size:13.25px;color:#2a2f3a;">Secret credential</div><div class="t" style="left:275.79999999999995px;top:238px;font-size:12.6px;color:#2a2f3a;letter-spacing:-0.2px;">2023-09-</div><div class="t" style="left:275.79999999999995px;top:258px;font-size:12.6px;color:#2a2f3a;letter-spacing:-0.2px;">07T04:41:33.807Z</div><div class="t" style="left:396.79999999999995px;top:248px;font-size:13.25px;color:#2a2f3a;">expired</div><div class="t" style="left:464.79999999999995px;top:218px;font-size:12.6px;color:#2a2f3a;letter-spacing:-0.2px;">29BDC399-</div><div class="t" style="left:464.79999999999995px;top:238px;font-size:12.6px;color:#2a2f3a;letter-spacing:-0.2px;">476B-4EEC-</div><div class="t" style="left:464.79999999999995px;top:258px;font-size:12.6px;color:#2a2f3a;letter-spacing:-0.2px;">A384-</div><div class="t" style="left:464.79999999999995px;top:278px;font-size:12.6px;color:#2a2f3a;letter-spacing:-0.2px;">2E0190D81410</div><div class="t" style="left:573.8px;top:248px;font-size:13.25px;color:#2a2f3a;">Manually Issued</div><div class="t" style="left:811.8px;top:248px;font-size:13.25px;color:#2a2f3a;">alvin</div><div class="t" style="left:8.5px;top:308.29999999999995px;font-size:12.6px;color:#2a8580;">3</div><div class="t" style="left:40.799999999999955px;top:309px;font-size:12.6px;color:#2a2f3a;letter-spacing:-0.2px;">86F06732-</div><div class="t" style="left:40.799999999999955px;top:329px;font-size:12.6px;color:#2a2f3a;letter-spacing:-0.2px;">096B-4B76-</div><div class="t" style="left:40.799999999999955px;top:349px;font-size:12.6px;color:#2a2f3a;letter-spacing:-0.2px;">AF1C-</div><div class="t" style="left:40.799999999999955px;top:369px;font-size:12.6px;color:#2a2f3a;letter-spacing:-0.2px;">5849310B8ACC</div><div class="t" style="left:149.79999999999995px;top:339px;font-size:13.25px;color:#2a2f3a;">Secret credential</div><div class="t" style="left:275.79999999999995px;top:329px;font-size:12.6px;color:#2a2f3a;letter-spacing:-0.2px;">2023-09-</div><div class="t" style="left:275.79999999999995px;top:349px;font-size:12.6px;color:#2a2f3a;letter-spacing:-0.2px;">07T03:40:30.521Z</div><div class="t" style="left:396.79999999999995px;top:339px;font-size:13.25px;color:#2a2f3a;">expired</div><div class="t" style="left:464.79999999999995px;top:309px;font-size:12.6px;color:#2a2f3a;letter-spacing:-0.2px;">78C54E4E-</div><div class="t" style="left:464.79999999999995px;top:329px;font-size:12.6px;color:#2a2f3a;letter-spacing:-0.2px;">423E-4CF5-</div><div class="t" style="left:464.79999999999995px;top:349px;font-size:12.6px;color:#2a2f3a;letter-spacing:-0.2px;">9651-</div><div class="t" style="left:464.79999999999995px;top:369px;font-size:12.6px;color:#2a2f3a;letter-spacing:-0.2px;">D632C6A33BF3</div><div class="t" style="left:573.8px;top:339px;font-size:13.25px;color:#2a2f3a;">Manually Issued</div><div class="t" style="left:811.8px;top:339px;font-size:13.25px;color:#2a2f3a;">bar.hb</div><div class="t" style="left:8.5px;top:399.29999999999995px;font-size:12.6px;color:#2a8580;">4</div><div class="t" style="left:40.799999999999955px;top:400px;font-size:12.6px;color:#2a2f3a;letter-spacing:-0.2px;">86F06732-</div><div class="t" style="left:40.799999999999955px;top:420px;font-size:12.6px;color:#2a2f3a;letter-spacing:-0.2px;">096B-4B76-</div><div class="t" style="left:40.799999999999955px;top:440px;font-size:12.6px;color:#2a2f3a;letter-spacing:-0.2px;">AF1C-</div><div class="t" style="left:40.799999999999955px;top:460px;font-size:12.6px;color:#2a2f3a;letter-spacing:-0.2px;">5849310B8ACC</div><div class="t" style="left:149.79999999999995px;top:430px;font-size:13.25px;color:#2a2f3a;">Secret credential</div><div class="t" style="left:275.79999999999995px;top:420px;font-size:12.6px;color:#2a2f3a;letter-spacing:-0.2px;">2023-09-</div><div class="t" style="left:275.79999999999995px;top:440px;font-size:12.6px;color:#2a2f3a;letter-spacing:-0.2px;">06T05:08:24.196Z</div><div class="t" style="left:396.79999999999995px;top:430px;font-size:13.25px;color:#2a2f3a;">revoked</div><div class="t" style="left:464.79999999999995px;top:400px;font-size:12.6px;color:#2a2f3a;letter-spacing:-0.2px;">78C54E4E-</div><div class="t" style="left:464.79999999999995px;top:420px;font-size:12.6px;color:#2a2f3a;letter-spacing:-0.2px;">423E-4CF5-</div><div class="t" style="left:464.79999999999995px;top:440px;font-size:12.6px;color:#2a2f3a;letter-spacing:-0.2px;">9651-</div><div class="t" style="left:464.79999999999995px;top:460px;font-size:12.6px;color:#2a2f3a;letter-spacing:-0.2px;">D632C6A33BF3</div><div class="t" style="left:573.8px;top:430px;font-size:13.25px;color:#2a2f3a;">Manually Issued</div><div class="t" style="left:811.8px;top:430px;font-size:13.25px;color:#2a2f3a;">bar.hb</div><div class="t" style="left:8.5px;top:490.29999999999995px;font-size:12.6px;color:#2a8580;">5</div><div class="t" style="left:40.799999999999955px;top:491px;font-size:12.6px;color:#2a2f3a;letter-spacing:-0.2px;">86F06732-</div><div class="t" style="left:40.799999999999955px;top:511px;font-size:12.6px;color:#2a2f3a;letter-spacing:-0.2px;">096B-4B76-</div><div class="t" style="left:40.799999999999955px;top:531px;font-size:12.6px;color:#2a2f3a;letter-spacing:-0.2px;">AF1C-</div><div class="t" style="left:40.799999999999955px;top:551px;font-size:12.6px;color:#2a2f3a;letter-spacing:-0.2px;">5849310B8ACC</div><div class="t" style="left:149.79999999999995px;top:521px;font-size:13.25px;color:#2a2f3a;">Secret credential</div><div class="t" style="left:275.79999999999995px;top:511px;font-size:12.6px;color:#2a2f3a;letter-spacing:-0.2px;">2023-09-</div><div class="t" style="left:275.79999999999995px;top:531px;font-size:12.6px;color:#2a2f3a;letter-spacing:-0.2px;">02T01:37:28.393Z</div><div class="t" style="left:396.79999999999995px;top:521px;font-size:13.25px;color:#2a2f3a;">expired</div><div class="t" style="left:464.79999999999995px;top:491px;font-size:12.6px;color:#2a2f3a;letter-spacing:-0.2px;">A2DA932C-</div><div class="t" style="left:464.79999999999995px;top:511px;font-size:12.6px;color:#2a2f3a;letter-spacing:-0.2px;">4E06-4CC8-</div><div class="t" style="left:464.79999999999995px;top:531px;font-size:12.6px;color:#2a2f3a;letter-spacing:-0.2px;">A4D3-</div><div class="t" style="left:464.79999999999995px;top:551px;font-size:12.6px;color:#2a2f3a;letter-spacing:-0.2px;">02139D1F2708</div><div class="t" style="left:573.8px;top:521px;font-size:13.25px;color:#2a2f3a;">Manually Issued</div><div class="t" style="left:811.8px;top:521px;font-size:13.25px;color:#2a2f3a;">barhb</div><div class="t" style="left:8.5px;top:581.3px;font-size:12.6px;color:#2a8580;">6</div><div class="t" style="left:40.799999999999955px;top:582px;font-size:12.6px;color:#2a2f3a;letter-spacing:-0.2px;">86F06732-</div><div class="t" style="left:40.799999999999955px;top:602px;font-size:12.6px;color:#2a2f3a;letter-spacing:-0.2px;">096B-4B76-</div><div class="t" style="left:40.799999999999955px;top:622px;font-size:12.6px;color:#2a2f3a;letter-spacing:-0.2px;">AF1C-</div><div class="t" style="left:40.799999999999955px;top:642px;font-size:12.6px;color:#2a2f3a;letter-spacing:-0.2px;">5849310B8ACC</div><div class="t" style="left:149.79999999999995px;top:612px;font-size:13.25px;color:#2a2f3a;">Secret credential</div><div class="t" style="left:275.79999999999995px;top:602px;font-size:12.6px;color:#2a2f3a;letter-spacing:-0.2px;">2023-09-</div><div class="t" style="left:275.79999999999995px;top:622px;font-size:12.6px;color:#2a2f3a;letter-spacing:-0.2px;">02T01:19:09.976Z</div><div class="t" style="left:396.79999999999995px;top:612px;font-size:13.25px;color:#2a2f3a;">expired</div><div class="t" style="left:464.79999999999995px;top:582px;font-size:12.6px;color:#2a2f3a;letter-spacing:-0.2px;">A2DA932C-</div><div class="t" style="left:464.79999999999995px;top:602px;font-size:12.6px;color:#2a2f3a;letter-spacing:-0.2px;">4E06-4CC8-</div><div class="t" style="left:464.79999999999995px;top:622px;font-size:12.6px;color:#2a2f3a;letter-spacing:-0.2px;">A4D3-</div><div class="t" style="left:464.79999999999995px;top:642px;font-size:12.6px;color:#2a2f3a;letter-spacing:-0.2px;">02139D1F2708</div><div class="t" style="left:573.8px;top:612px;font-size:13.25px;color:#2a2f3a;">Manually Issued</div><div class="t" style="left:811.8px;top:612px;font-size:13.25px;color:#2a2f3a;">barhb</div><div class="t" style="left:8.5px;top:672.3px;font-size:12.6px;color:#2a8580;">7</div><div class="t" style="left:40.799999999999955px;top:673px;font-size:12.6px;color:#2a2f3a;letter-spacing:-0.2px;">86F06732-</div><div class="t" style="left:40.799999999999955px;top:693px;font-size:12.6px;color:#2a2f3a;letter-spacing:-0.2px;">096B-4B76-</div><div class="t" style="left:40.799999999999955px;top:713px;font-size:12.6px;color:#2a2f3a;letter-spacing:-0.2px;">AF1C-</div><div class="t" style="left:40.799999999999955px;top:733px;font-size:12.6px;color:#2a2f3a;letter-spacing:-0.2px;">5849310B8ACC</div><div class="t" style="left:149.79999999999995px;top:703px;font-size:13.25px;color:#2a2f3a;">Secret credential</div><div class="t" style="left:275.79999999999995px;top:693px;font-size:12.6px;color:#2a2f3a;letter-spacing:-0.2px;">2023-09-</div><div class="t" style="left:275.79999999999995px;top:713px;font-size:12.6px;color:#2a2f3a;letter-spacing:-0.2px;">02T01:19:09.976Z</div><div class="t" style="left:396.79999999999995px;top:703px;font-size:13.25px;color:#2a2f3a;">expired</div><div class="t" style="left:464.79999999999995px;top:673px;font-size:12.6px;color:#2a2f3a;letter-spacing:-0.2px;">A2DA932C-</div><div class="t" style="left:464.79999999999995px;top:693px;font-size:12.6px;color:#2a2f3a;letter-spacing:-0.2px;">4E06-4CC8-</div><div class="t" style="left:464.79999999999995px;top:713px;font-size:12.6px;color:#2a2f3a;letter-spacing:-0.2px;">A4D3-</div><div class="t" style="left:464.79999999999995px;top:733px;font-size:12.6px;color:#2a2f3a;letter-spacing:-0.2px;">02139D1F2708</div><div class="t" style="left:573.8px;top:703px;font-size:13.25px;color:#2a2f3a;">Manually Issued</div><div class="t" style="left:811.8px;top:703px;font-size:13.25px;color:#2a2f3a;">barhb</div></div><div style="position:absolute;left:40px;top:887px;width:1913px;height:60px;box-shadow:0 0 40px 4px rgba(40,45,60,0.16)"></div>
</body></html>
